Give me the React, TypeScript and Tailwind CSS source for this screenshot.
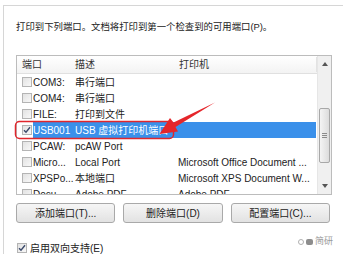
import React from "react";

const FONT = {
  fontFamily: '"Liberation Sans", "Noto Sans CJK SC", sans-serif',
};

type Row = {
  port: string;
  desc: string;
  printer?: string;
  checked?: boolean;
  selected?: boolean;
};

const ROWS: Row[] = [
  { port: "COM3:", desc: "串行端口" },
  { port: "COM4:", desc: "串行端口" },
  { port: "FILE:", desc: "打印到文件" },
  { port: "USB001", desc: "USB 虚拟打印机端口", checked: true, selected: true },
  { port: "PCAW:", desc: "pcAW Port" },
  { port: "Micro...", desc: "Local Port", printer: "Microsoft Office Document ..." },
  { port: "XPSPo...", desc: "本地端口", printer: "Microsoft XPS Document W..." },
  { port: "Docu...", desc: "Adobe PDF", printer: "Adobe PDF" },
];

function Check({ checked }: { readonly checked?: boolean }) {
  return (
    <span className="flex h-[10px] w-[10px] items-center justify-center border border-[#b4b4b4] bg-gradient-to-br from-[#e2e2e2] to-[#f8f8f8]">
      {checked && (
        <svg width="8" height="8" viewBox="0 0 8 8">
          <path d="M1 4.2 L3 6.3 L7 1.3" fill="none" stroke="#3b4a6b" strokeWidth="1.4" />
        </svg>
      )}
    </span>
  );
}

function Button({ label }: { readonly label: string }) {
  return (
    <button className="flex h-[20px] items-center justify-center rounded-[3px] border border-[#a9a9a9] bg-gradient-to-b from-[#f6f6f6] to-[#e2e2e2] text-[10px] text-[#222]">
      {label}
    </button>
  );
}

export default function App() {
  return (
    <div className="relative h-[254px] w-[343px] overflow-hidden bg-white" style={FONT}>
      <div className="ml-[3px] mt-[5px] h-full border-l border-t border-[#d6d6d6] pl-[12px] pr-[12px]">
        <p className="pt-[14px] text-[9.4px] leading-[14px] text-[#222]">
          打印到下列端口。文档将打印到第一个检查到的可用端口(P)。
        </p>

        {/* port list */}
        <div className="mt-[21px] flex h-[140px] w-[316px] border border-[#bcbcbc]">
          <div className="flex-1 overflow-hidden">
            <div className="flex h-[18px] items-center border-b border-[#e0e0e0] bg-gradient-to-b from-white to-[#f3f3f3] text-[10px] text-[#333]">
              <span className="w-[58px] pl-[5px]">端口</span>
              <span className="w-[104px]">描述</span>
              <span className="flex-1 border-r border-[#e3e3e3]">打印机</span>
            </div>
            {ROWS.map((r) => (
              <div key={r.port} className="flex h-[16px] items-center text-[10px] text-[#222]">
                <span className="w-[16px] pl-[5px]">
                  <Check checked={r.checked} />
                </span>
                <div
                  className={
                    r.selected
                      ? "mr-[1px] flex h-full flex-1 items-center bg-[#3a90ea] text-white"
                      : "flex h-full flex-1 items-center"
                  }
                >
                  <span className="w-[42px] whitespace-nowrap">{r.port}</span>
                  <span className="w-[103px] whitespace-nowrap">{r.desc}</span>
                  <span className="flex-1 whitespace-nowrap">{r.printer ?? ""}</span>
                </div>
              </div>
            ))}
          </div>
          {/* scrollbar */}
          <div className="relative w-[14px] border-l border-[#e6e6e6] bg-[#f0f0f0]">
            <svg className="absolute left-[4px] top-[6px]" width="6" height="4" viewBox="0 0 6 4">
              <path d="M0 4 L3 0 L6 4 Z" fill="#555" />
            </svg>
            <div className="absolute left-[1px] top-[52px] flex h-[55px] w-[11px] items-center justify-center rounded-[2px] border border-[#a8a8a8] bg-gradient-to-r from-[#f4f4f4] to-[#dcdcdc]">
              <div className="flex flex-col gap-[1px]">
                <span className="h-px w-[5px] bg-[#8a8a8a]" />
                <span className="h-px w-[5px] bg-[#8a8a8a]" />
                <span className="h-px w-[5px] bg-[#8a8a8a]" />
              </div>
            </div>
            <svg className="absolute bottom-[6px] left-[4px]" width="6" height="4" viewBox="0 0 6 4">
              <path d="M0 0 L3 4 L6 0 Z" fill="#555" />
            </svg>
          </div>
        </div>

        <div className="mt-[8px] grid w-[314px] grid-cols-3 gap-2">
          <Button label="添加端口(T)..." />
          <Button label="删除端口(D)" />
          <Button label="配置端口(C)..." />
        </div>

        <div className="mt-[18px] flex h-[14px] items-center gap-[3px] pl-[1px] text-[10px] text-[#222]">
          <Check checked />
          <span>启用双向支持(E)</span>
        </div>
      </div>

      {/* watermark */}
      <div className="absolute left-[298px] top-[235px] flex items-center gap-[2px] text-[9px] text-[#9a9a9a]">
        <span className="h-[6px] w-[6px] rounded-full border border-[#b0b0b0]" />
        <span className="h-[6px] w-[7px] rounded-[2px] bg-[#8d8d8d]" />
        <span>简研</span>
      </div>

      {/* red annotation */}
      <svg className="pointer-events-none absolute left-0 top-0" width="343" height="254" viewBox="0 0 343 254">
        <rect x="15.5" y="121.5" width="158" height="17" rx="4" fill="none" stroke="#e0262c" strokeWidth="1.5" />
        <path d="M215 102.5 L175.5 127 L178 131.5 L159.5 134 L170 118 L173.5 122.5 Z" fill="#e5262b" />
      </svg>
    </div>
  );
}
